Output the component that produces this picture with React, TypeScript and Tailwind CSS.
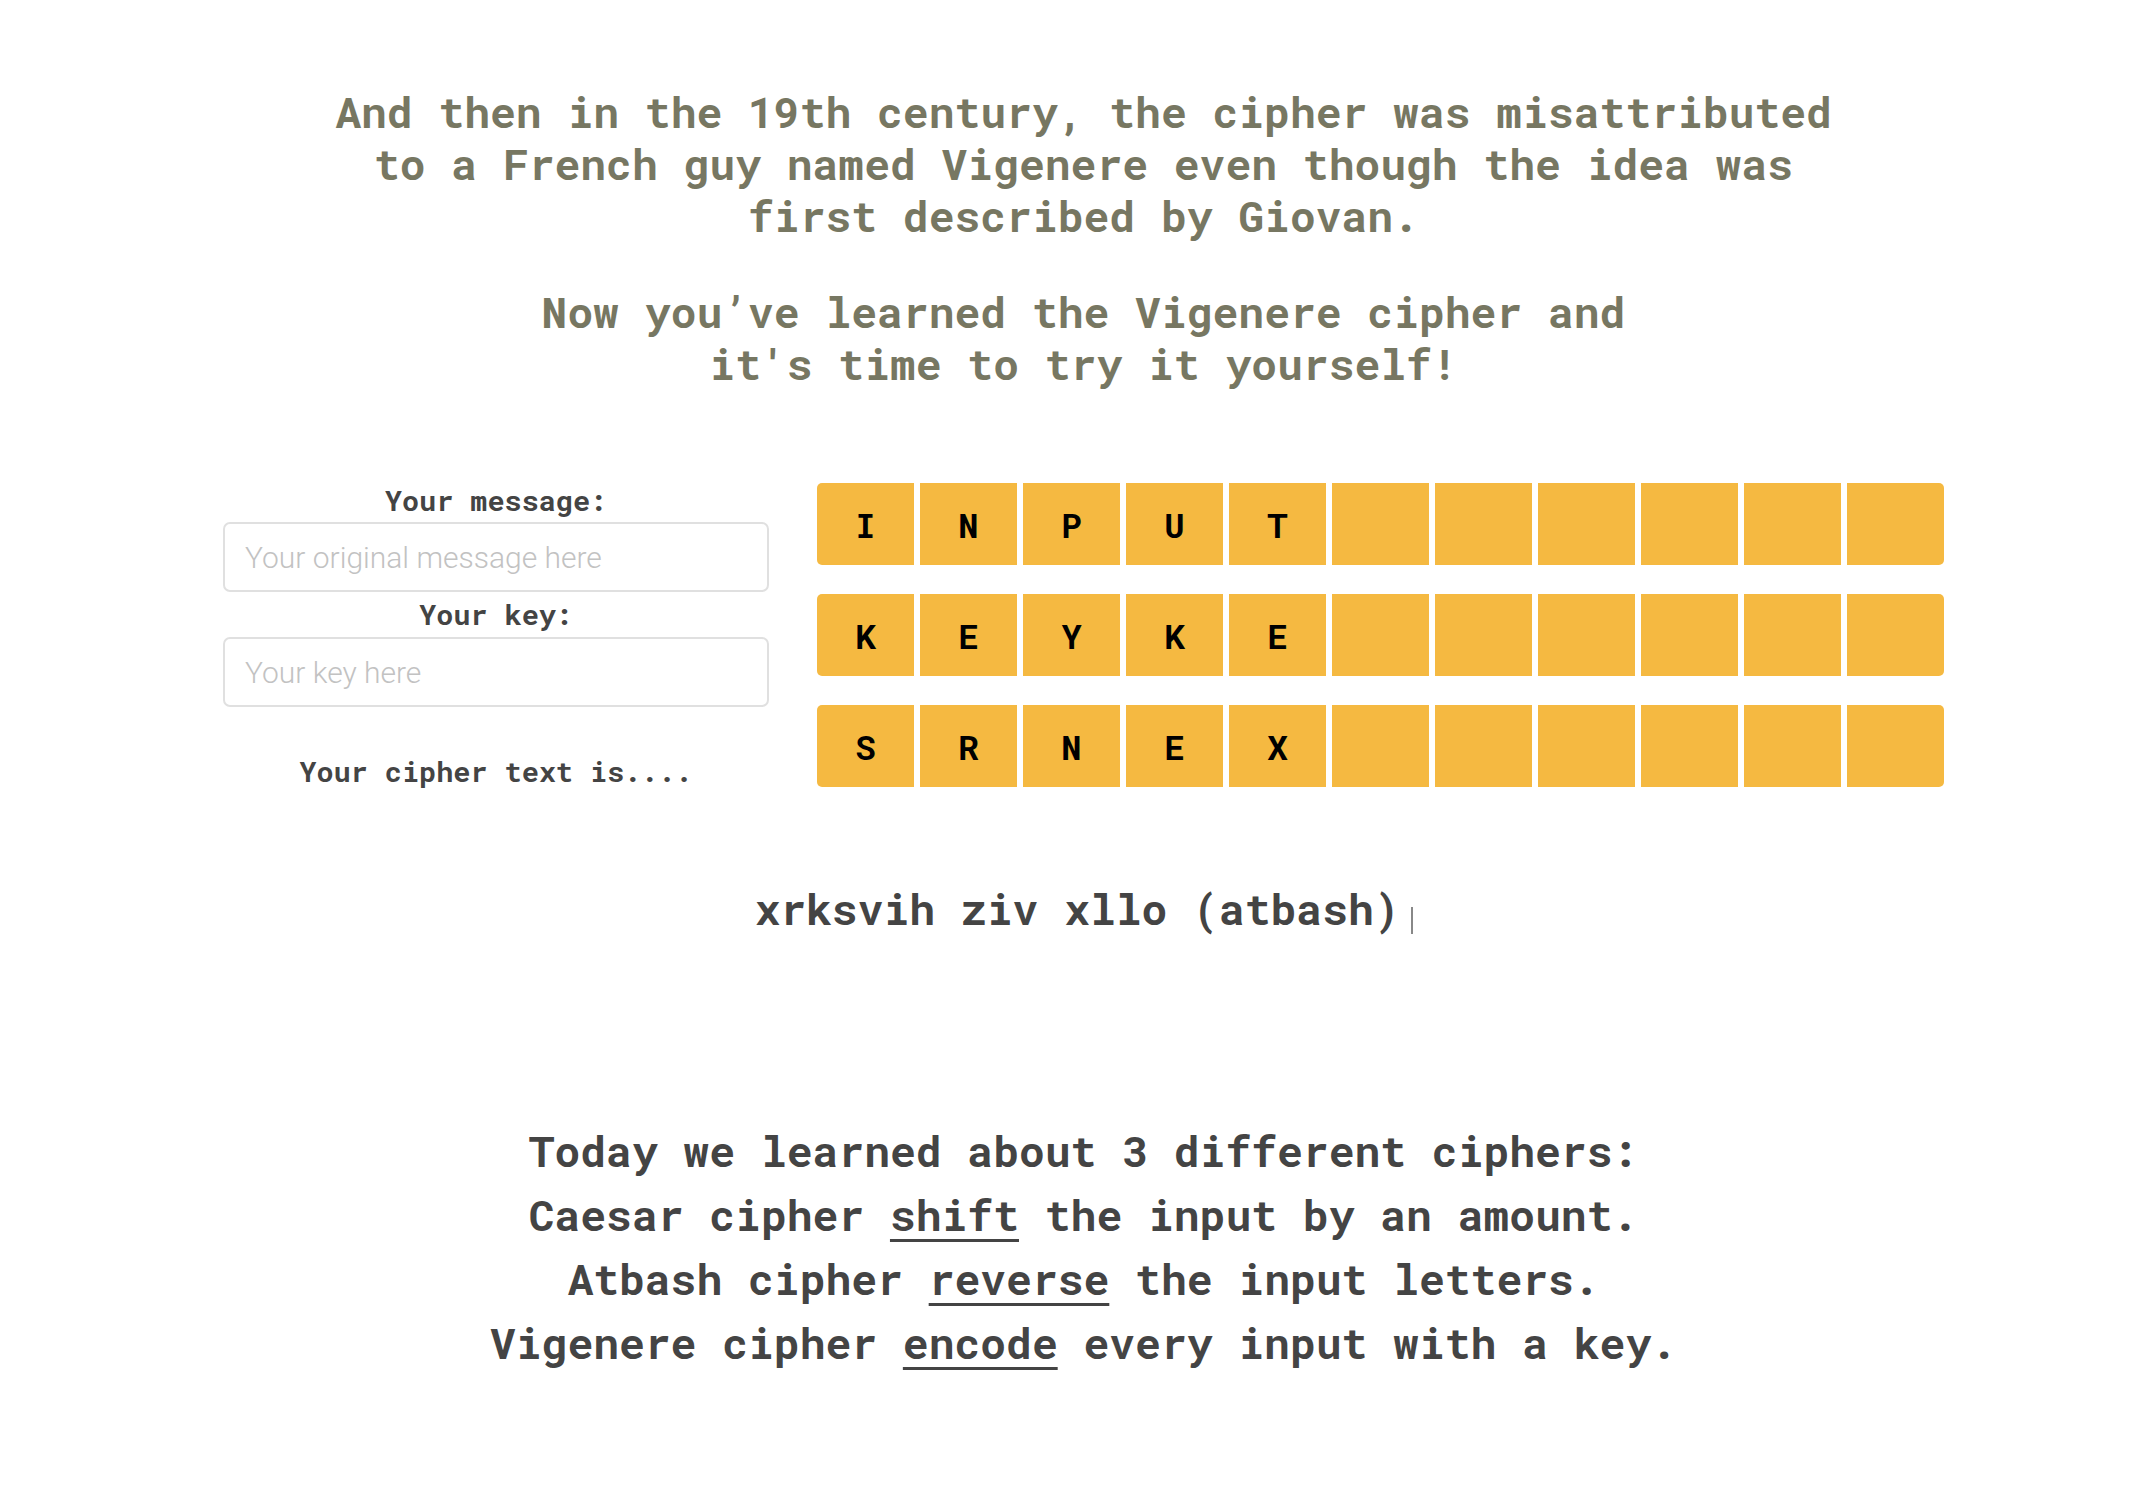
import { useState } from 'react'

const mono = "font-['Roboto_Mono','DejaVu_Sans_Mono',monospace]"

const rows: string[][] = [
  ['I', 'N', 'P', 'U', 'T'],
  ['K', 'E', 'Y', 'K', 'E'],
  ['S', 'R', 'N', 'E', 'X']
]

function TileRow({ letters }: { letters: string[] }) {
  const cells = Array.from({ length: 11 }, (_, i) => letters[i] ?? '')
  return (
    <div className="flex gap-[6px] rounded-[5px] overflow-hidden">
      {cells.map((c, i) => (
        <div
          key={i}
          className={`w-[97px] h-[82px] bg-[#f5b941] flex items-center justify-center text-[34px] font-bold text-black ${mono}`}
        >
          {c}
        </div>
      ))}
    </div>
  )
}

export default function App() {
  const [message, setMessage] = useState('')
  const [key, setKey] = useState('')

  return (
    <div className={`min-h-screen bg-white pl-[27px] ${mono}`}>
      {/* Intro */}
      <div className="pt-[86px] text-center text-[43px] leading-[52px] font-bold text-[#777762]">
        <p>
          And then in the 19th century, the cipher was misattributed
          <br />
          to a French guy named Vigenere even though the idea was
          <br />
          first described by Giovan.
        </p>
        <p className="mt-[44px]">
          Now you’ve learned the Vigenere cipher and
          <br />
          it's time to try it yourself!
        </p>
      </div>

      {/* Playground */}
      <div className="mt-[89px] flex justify-center items-start gap-[48px]">
        <div className="w-[546px] flex flex-col text-center text-[28.5px] font-bold text-[#444]">
          <label className="leading-[43px]">Your message:</label>
          <input
            value={message}
            onChange={(e) => setMessage(e.target.value)}
            placeholder="Your original message here"
            className="h-[70px] w-full border-2 border-[#e0e0e0] rounded-[7px] px-[20px] text-[30px] font-light text-[#444] font-['Roboto','Noto_Sans',sans-serif] placeholder:text-[#c2c2c2] outline-none"
          />
          <label className="leading-[45px]">Your key:</label>
          <input
            value={key}
            onChange={(e) => setKey(e.target.value)}
            placeholder="Your key here"
            className="h-[70px] w-full border-2 border-[#e0e0e0] rounded-[7px] px-[20px] text-[30px] font-light text-[#444] font-['Roboto','Noto_Sans',sans-serif] placeholder:text-[#c2c2c2] outline-none"
          />
          <p className="mt-[42px] leading-[44px]">Your cipher text is....</p>
        </div>

        <div className="mt-[4px] flex flex-col gap-[29px]">
          {rows.map((r, i) => (
            <TileRow key={i} letters={r} />
          ))}
        </div>
      </div>

      {/* Output */}
      <div className="mt-[86px] flex justify-center items-center text-[43px] leading-[60px] font-bold text-[#444]">
        <span>xrksvih ziv xllo (atbash)</span>
        <span className="ml-[11px] mt-[22px] w-[2px] h-[27px] bg-[#888]" />
      </div>

      {/* Summary */}
      <div className="mt-[180px] pb-[120px] text-center text-[43px] leading-[64px] font-bold text-[#444]">
        <p>Today we learned about 3 different ciphers:</p>
        <p>
          Caesar cipher <span className="underline decoration-[3px] underline-offset-[8px]">shift</span> the input by an amount.
        </p>
        <p>
          Atbash cipher <span className="underline decoration-[3px] underline-offset-[8px]">reverse</span> the input letters.
        </p>
        <p>
          Vigenere cipher <span className="underline decoration-[3px] underline-offset-[8px]">encode</span> every input with a key.
        </p>
      </div>
    </div>
  )
}
